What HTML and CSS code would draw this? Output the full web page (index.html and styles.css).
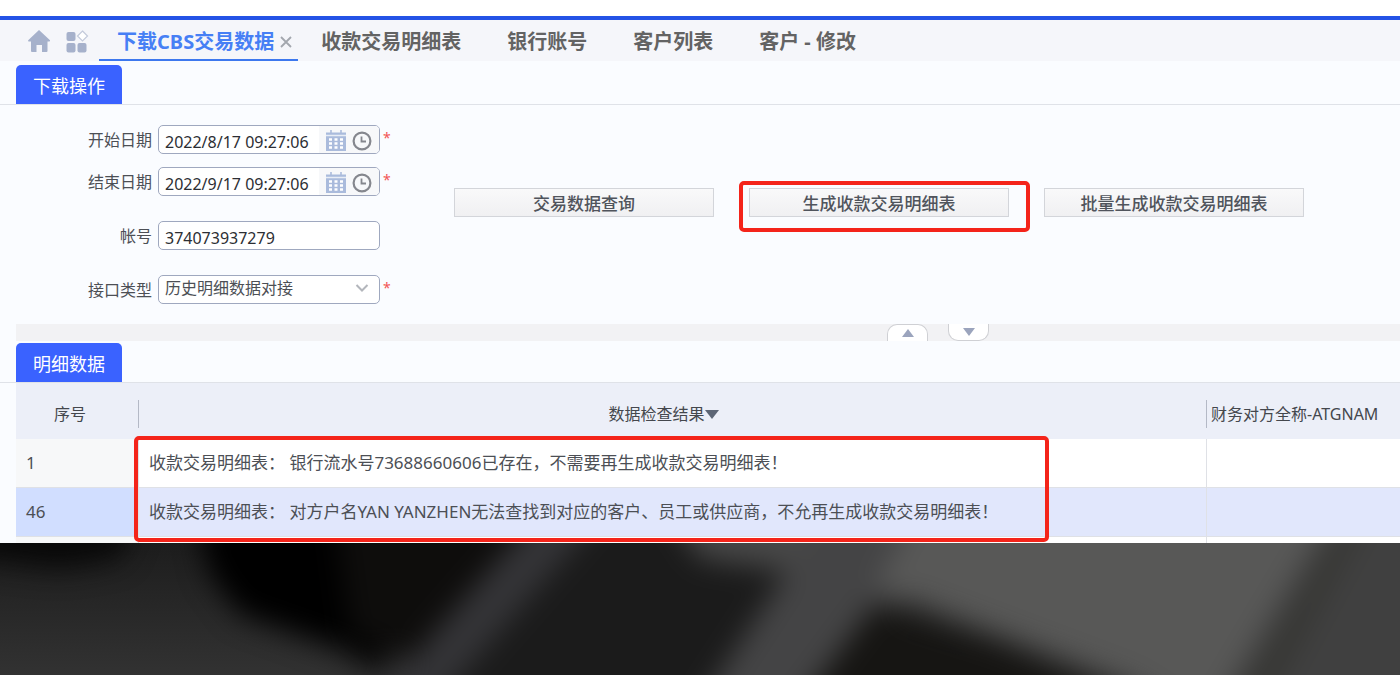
FILE: index.html
```html
<!DOCTYPE html>
<html lang="zh-CN">
<head>
    <meta charset="UTF-8">
    <meta name="viewport" content="width=device-width, initial-scale=1.0">
    <title>下载CBS交易数据</title>
    <link rel="stylesheet" href="styles.css">
</head>
<body>
    <div class="app">
        <nav class="tab-bar">
            <a href="#" class="nav-icon" aria-label="首页">
                <svg width="24" height="24" viewBox="0 0 24 24" fill="#a6b1cb">
                    <path d="M12 1 L23 11.2 Q23.4 12.4 22 12.6 H20.5 V22 Q20.5 23 19.5 23 H15 V16 H9.5 V23 H5 Q4 23 4 22 V12.6 H2 Q.6 12.4 1.2 11.2 Z"/>
                </svg>
            </a>
            <a href="#" class="nav-icon" aria-label="应用">
                <svg width="24" height="24" viewBox="0 0 24 24" fill="#a6b1cb">
                    <rect x="1.5" y="3" width="9" height="9" rx="2"/>
                    <rect x="1.5" y="14" width="9" height="9.5" rx="2"/>
                    <rect x="12.5" y="14" width="9" height="9.5" rx="2"/>
                    <path d="M17.5 2 L22.5 7 L17.5 12 L12.5 7 Z" fill="#fff" stroke="#c3cadb" stroke-width="1.2"/>
                </svg>
            </a>
            <div class="tab active">
                <a href="#">下载CBS交易数据</a>
                <button type="button" class="close" aria-label="关闭">
                    <svg width="12" height="12" viewBox="0 0 12 12" stroke="#a3a7ae" stroke-width="1.8"><path d="M1 1 L11 11 M11 1 L1 11"/></svg>
                </button>
            </div>
            <div class="tab"><a href="#">收款交易明细表</a></div>
            <div class="tab"><a href="#">银行账号</a></div>
            <div class="tab"><a href="#">客户列表</a></div>
            <div class="tab"><a href="#">客户 - 修改</a></div>
        </nav>

        <section class="panel">
            <div class="panel-head"><h2>下载操作</h2></div>
            <form class="query">
                <div class="fields">
                    <div class="field">
                        <label for="startDate">开始日期</label>
                        <div class="box">
                            <input type="text" id="startDate" value="2022/8/17 09:27:06">
                            <div class="pickers">
                                <button type="button" aria-label="选择日期">
                                    <svg width="22" height="22" viewBox="0 0 22 22">
                                        <path d="M1 2.5 H21 V21 H1 Z" fill="#aabbdc"/>
                                        <path d="M1 5.5 H21" stroke="#e8edf6" stroke-width="1.4"/>
                                        <path d="M6 0 V4 M16 0 V4" stroke="#aabbdc" stroke-width="1.6"/>
                                        <path d="M4 9.5 H18 M4 13.5 H18 M4 17.5 H18" stroke="#fff" stroke-width="2.4" stroke-dasharray="3 2.5"/>
                                    </svg>
                                </button>
                                <button type="button" aria-label="选择时间">
                                    <svg width="20" height="20" viewBox="0 0 20 20" fill="none">
                                        <circle cx="10" cy="10" r="8.4" stroke="#85878e" stroke-width="2.2"/>
                                        <path d="M9.5 5.5 V10.5 H14" stroke="#85878e" stroke-width="1.8"/>
                                    </svg>
                                </button>
                            </div>
                        </div>
                        <span class="required">*</span>
                    </div>
                    <div class="field">
                        <label for="endDate">结束日期</label>
                        <div class="box">
                            <input type="text" id="endDate" value="2022/9/17 09:27:06">
                            <div class="pickers">
                                <button type="button" aria-label="选择日期">
                                    <svg width="22" height="22" viewBox="0 0 22 22">
                                        <path d="M1 2.5 H21 V21 H1 Z" fill="#aabbdc"/>
                                        <path d="M1 5.5 H21" stroke="#e8edf6" stroke-width="1.4"/>
                                        <path d="M6 0 V4 M16 0 V4" stroke="#aabbdc" stroke-width="1.6"/>
                                        <path d="M4 9.5 H18 M4 13.5 H18 M4 17.5 H18" stroke="#fff" stroke-width="2.4" stroke-dasharray="3 2.5"/>
                                    </svg>
                                </button>
                                <button type="button" aria-label="选择时间">
                                    <svg width="20" height="20" viewBox="0 0 20 20" fill="none">
                                        <circle cx="10" cy="10" r="8.4" stroke="#85878e" stroke-width="2.2"/>
                                        <path d="M9.5 5.5 V10.5 H14" stroke="#85878e" stroke-width="1.8"/>
                                    </svg>
                                </button>
                            </div>
                        </div>
                        <span class="required">*</span>
                    </div>
                    <div class="field spaced">
                        <label for="account">帐号</label>
                        <div class="box">
                            <input type="text" id="account" value="374073937279">
                        </div>
                    </div>
                    <div class="field spaced">
                        <label for="apiType">接口类型</label>
                        <div class="box">
                            <select id="apiType">
                                <option>历史明细数据对接</option>
                            </select>
                            <svg class="chevron" width="14" height="8" viewBox="0 0 14 8" fill="none" stroke="#b3b6bc" stroke-width="2"><path d="M1.5 1 L7 6.5 L12.5 1"/></svg>
                        </div>
                        <span class="required">*</span>
                    </div>
                </div>
                <div class="actions">
                    <button type="button">交易数据查询</button>
                    <div class="marked"><button type="button">生成收款交易明细表</button></div>
                    <button type="button">批量生成收款交易明细表</button>
                </div>
            </form>
        </section>

        <div class="splitter">
            <button type="button" class="fold up" aria-label="向上收起">
                <svg width="12" height="8" viewBox="0 0 12 8" fill="#9ba4bd"><path d="M6 0 L12 8 H0 Z"/></svg>
            </button>
            <button type="button" class="fold down" aria-label="向下收起">
                <svg width="12" height="8" viewBox="0 0 12 8" fill="#9ba4bd"><path d="M0 0 H12 L6 8 Z"/></svg>
            </button>
        </div>

        <section class="panel details">
            <div class="panel-head"><h2>明细数据</h2></div>
            <div class="table-wrap">
                <table>
                    <thead>
                        <tr>
                            <th class="col-no"><span>序号</span></th>
                            <th class="col-result"><span>数据检查结果<svg width="14" height="9" viewBox="0 0 14 9" fill="#5c6575"><path d="M0 0 H14 L7 9 Z"/></svg></span></th>
                            <th class="col-name"><span>财务对方全称-ATGNAM</span></th>
                        </tr>
                    </thead>
                    <tbody>
                        <tr>
                            <td>1</td>
                            <td>收款交易明细表： 银行流水号73688660606已存在，不需要再生成收款交易明细表！</td>
                            <td></td>
                        </tr>
                        <tr class="selected">
                            <td>46</td>
                            <td>收款交易明细表： 对方户名YAN YANZHEN无法查找到对应的客户、员工或供应商，不允再生成收款交易明细表！</td>
                            <td></td>
                        </tr>
                        <tr class="next-row">
                            <td></td>
                            <td></td>
                            <td></td>
                        </tr>
                    </tbody>
                </table>
                <div class="table-mark"></div>
            </div>
        </section>
    </div>

    <svg class="backdrop" viewBox="0 0 1400 131" preserveAspectRatio="none" aria-hidden="true">
        <defs>
            <filter id="soft" x="-20%" y="-40%" width="140%" height="180%" color-interpolation-filters="sRGB">
                <feGaussianBlur stdDeviation="14"/>
            </filter>
            <linearGradient id="base" x1="0" x2="0" y1="0" y2="1">
                <stop offset="0" stop-color="#1d1d1d"/>
                <stop offset="1" stop-color="#323232"/>
            </linearGradient>
        </defs>
        <rect width="1400" height="131" fill="url(#base)"/>
        <g filter="url(#soft)">
            <path d="M-60 -60 H150 L120 15 L60 25 L-60 10 Z" fill="#080808"/>
            <path d="M190 -60 H380 L385 131 L340 105 L240 70 L210 30 Z" fill="#000"/>
            <path d="M330 -60 H600 L420 120 L350 90 Z" fill="#0e0d0c"/>
            <path d="M565 -60 H640 L430 190 H345 Z" fill="#343437"/>
            <path d="M630 -60 H870 L690 200 H400 Z" fill="#1b1b1b"/>
            <path d="M650 -60 H860 L805 30 L700 15 Z" fill="#484848"/>
            <path d="M845 -60 H1000 L870 100 L790 190 H680 Z" fill="#444445"/>
            <path d="M930 -60 H1350 L1210 190 L1130 140 L875 45 Z" fill="#585857"/>
            <path d="M875 60 L1000 100 L1120 150 V200 H770 Z" fill="#161513"/>
            <path d="M1350 -60 H1480 V190 H1200 Z" fill="#404040"/>
            <path d="M1355 -40 H1375 L1250 190 H1215 Z" fill="#363633"/>
        </g>
    </svg>
</body>
</html>
```
FILE: styles.css
```css
* {
    box-sizing: border-box;
}
body {
    margin: 0;
    min-height: 100vh;
    display: flex;
    flex-direction: column;
    background: #fff;
    color: #4c4f55;
    font-family: "Noto Sans", "Noto Sans CJK SC", sans-serif;
    font-size: 16px;
    line-height: 24px;
}
button, input, select {
    margin: 0;
    padding: 0;
    font: inherit;
    color: inherit;
    background: none;
    border: none;
}
button {
    cursor: pointer;
}
svg {
    display: block;
}
a {
    color: inherit;
    text-decoration: none;
}
.app {
    margin-top: 16px;
    border-top: 4px solid #2453e6;
    background: #fafcff;
}

/* tabs */
.tab-bar {
    display: flex;
    height: 41px;
    padding-left: 27px;
    background: #f5f6fa;
}
.nav-icon {
    margin-right: 14px;
    padding-top: 9px;
}
.nav-icon + .tab {
    margin-left: -4px;
}
.tab {
    display: flex;
    align-items: center;
    gap: 6px;
    padding: 2px 23px 0;
    font-size: 20px;
    line-height: 28px;
    font-weight: bold;
    color: #636363;
    white-space: nowrap;
}
.tab.active {
    padding: 4px 6px 0 18px;
    border-bottom: 2px solid #3d78ee;
    color: #467ff5;
}

/* panels */
.panel-head {
    margin-top: 4px;
    padding-left: 16px;
    border-bottom: 1px solid #dfe2e8;
}
.panel-head h2 {
    width: 106px;
    height: 39px;
    margin: 0;
    padding-top: 2px;
    border-radius: 5px 5px 0 0;
    background: #3a62ff;
    color: #fff;
    font-size: 18px;
    line-height: 38px;
    font-weight: normal;
    text-align: center;
}
.query {
    display: flex;
    gap: 60px;
    padding: 20px 0;
}
.field {
    display: flex;
    align-items: center;
    margin-bottom: 13px;
}
.field.spaced {
    margin: 25px 0 0;
}
.field label {
    width: 152px;
    margin-right: 6px;
    text-align: right;
}
.box {
    display: flex;
    position: relative;
    width: 222px;
    height: 29px;
    border: 1px solid #9fa8bf;
    border-radius: 5px;
    background: #fff;
    overflow: hidden;
}
.box input {
    flex: 1;
    min-width: 0;
    padding: 4px 0 0 6px;
    color: #2c2e33;
}
.box select {
    width: 100%;
    padding: 0 0 3px 6px;
    appearance: none;
}
.chevron {
    position: absolute;
    right: 10px;
    top: 8px;
    pointer-events: none;
}
.pickers {
    display: flex;
    align-items: center;
    gap: 5px;
    padding: 2px 7px 0 6px;
    background: #f7f8fa;
}
.required {
    width: 14px;
    padding: 0 0 4px 3px;
    color: #f25555;
    font-size: 14px;
}
.actions {
    display: flex;
    gap: 35px;
    padding-top: 63px;
}
.actions button {
    width: 260px;
    height: 29px;
    padding-top: 2px;
    border: 1px solid #d3d5da;
    background: linear-gradient(#f9f9fa, #f0f0f2);
    color: #50545c;
    font-size: 17px;
    line-height: 24px;
    font-weight: 500;
}
.marked {
    position: relative;
    height: 29px;
}
.marked::after {
    content: "";
    position: absolute;
    inset: -7px -21px -15px -10px;
    border: 4px solid #f4241a;
    border-radius: 5px;
    pointer-events: none;
}

/* splitter */
.splitter {
    display: flex;
    justify-content: flex-end;
    gap: 20px;
    height: 17px;
    margin-left: 16px;
    padding-right: 411px;
    background: #f2f2f4;
}
.fold {
    display: flex;
    justify-content: center;
    align-items: center;
    width: 41px;
    background: #fff;
    border: 1px solid #cfd0d4;
}
.fold.up {
    border-bottom: none;
    border-radius: 10px 10px 0 0;
}
.fold.down {
    border-top: none;
    border-radius: 0 0 10px 10px;
}

/* table */
.details .panel-head {
    margin-top: 2px;
}
.table-wrap {
    position: relative;
    margin-left: 16px;
}
table {
    width: 100%;
    table-layout: fixed;
    border-collapse: separate;
    border-spacing: 0;
}
th {
    height: 56px;
    padding: 6px 0 0;
    background: #eceff8;
    font-weight: normal;
    color: #44474d;
    white-space: nowrap;
}
th span {
    display: flex;
    align-items: center;
    justify-content: center;
    height: 28px;
    border-right: 1px solid #b4b9c6;
}
.col-no {
    width: 123px;
}
.col-no span {
    padding-right: 14px;
}
.col-result span {
    padding-right: 18px;
}
.col-name {
    width: 193px;
}
.col-name span {
    justify-content: flex-start;
    padding-left: 4px;
    border-right: none;
}
td {
    height: 49px;
    padding: 0 10px;
    border-bottom: 1px solid #dfe1e6;
    border-right: 1px solid #dfe1e6;
    background: #fff;
    font-size: 17px;
    white-space: nowrap;
}
td:first-child {
    background: #f7f8f9;
}
td:last-child {
    border-right: none;
}
.selected td {
    background: #e1e7fc;
}
.selected td:first-child {
    background: #d1deff;
}
.next-row td {
    height: 6px;
    border-bottom: none;
}
/* frame round the check results */
.table-mark {
    position: absolute;
    left: 118px;
    right: 351px;
    top: 53px;
    bottom: 1px;
    border: 4px solid #f4241a;
    border-radius: 5px;
    pointer-events: none;
}

.backdrop {
    flex: 1;
    width: 100%;
    height: 0;
    min-height: 100px;
}
```
